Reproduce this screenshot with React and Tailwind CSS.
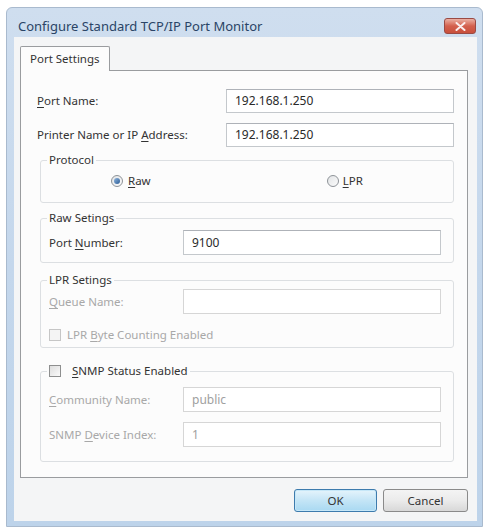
import React from "react";

const font = { fontFamily: '"Noto Sans", "Open Sans", Arial, sans-serif' };

// Text with an underlined access key, like a Win32 dialog label
const Key = ({ text, at = 0 }) => (
    <>
        {text.slice(0, at)}
        <span className="underline underline-offset-2">{text[at]}</span>
        {text.slice(at + 1)}
    </>
);

const TextBox = ({ value, width, height = "h-[25px]", disabled }) => (
    <div
        className={`${width} ${height} flex items-center px-[8px] bg-white border ${
            disabled ? "border-[#d6d6d6] text-[#a0a0a0]" : "border-[#c4c8cc] border-t-[#aeb2b8] text-[#2a2a2a]"
        } text-[12px]`}
    >
        {value}
    </div>
);

const Radio = ({ checked }) => (
    <div className="w-[12px] h-[12px] rounded-full border border-[#8e9398] bg-gradient-to-br from-[#e2e4e6] to-[#fbfbfb] flex items-center justify-center">
        {checked && <div className="w-[6px] h-[6px] rounded-full bg-gradient-to-br from-[#8fb4dc] to-[#2a5d96]" />}
    </div>
);

const Check = ({ disabled }) => (
    <div
        className={`w-[12px] h-[12px] border ${
            disabled ? "border-[#c6c6c6] bg-[#f4f4f4]" : "border-[#8e8f8f] bg-gradient-to-br from-[#dedede] to-[#fafafa]"
        }`}
    />
);

const Group = ({ legend, className, children }) => (
    <fieldset className={`ml-[19px] w-[414px] border border-[#dcdfe2] rounded-[3px] pl-[8px] pr-[12px] ${className}`}>
        <legend className="px-[2px] -ml-[2px] h-[16px] leading-[16px] text-[11.5px] text-[#333]">{legend}</legend>
        {children}
    </fieldset>
);

export default function App() {
    return (
        <div className="w-[487px] h-[528px] bg-white overflow-hidden" style={font}>
            <div className="ml-[6px] mt-[7px] w-[477px] h-[520px] flex flex-col rounded-t-[6px] border border-[#a9bace] bg-gradient-to-b from-[#cfdeef] via-[#c4d7ec] to-[#bdd3ea]">
                {/* title bar */}
                <div className="h-[29px] flex items-start justify-between pl-[11px] pr-[6px]">
                    <span className="mt-[10px] text-[13px] leading-[16px] text-[#2a4466]">Configure Standard TCP/IP Port Monitor</span>
                    <div className="mt-[10px] w-[32px] h-[16px] rounded-[3px] border border-[#9a4a44] bg-gradient-to-b from-[#eab0a4] via-[#d3604e] to-[#c9503c] flex items-center justify-center">
                        <svg width="11" height="9" viewBox="0 0 11 9">
                            <path d="M1.5 1 L9.5 8 M9.5 1 L1.5 8" stroke="#fbeeee" strokeWidth="2" strokeLinecap="round" />
                        </svg>
                    </div>
                </div>

                {/* client area */}
                <div className="ml-[7px] mr-[5px] mb-[5px] flex-1 bg-[#f4f5f6] pl-[6px] pt-[9px] flex flex-col">
                    <div className="flex">
                        <div className="relative z-10 -mb-px h-[25px] px-[9px] flex items-center bg-[#fcfcfc] border border-b-0 border-[#9a9c9f] text-[11.5px] text-[#333] rounded-t-[2px]">
                            Port Settings
                        </div>
                    </div>

                    {/* tab page */}
                    <div className="w-[448px] h-[408px] bg-[#fcfcfc] border border-[#9a9c9f] pt-[18px]">
                        <div className="flex items-center h-[24px] pl-[16px] text-[11.5px] text-[#333]">
                            <span className="w-[189px]"><Key text="Port Name:" /></span>
                            <TextBox value="192.168.1.250" width="w-[228px]" height="h-[24px]" />
                        </div>
                        <div className="flex items-center h-[24px] mt-[10px] pl-[16px] text-[11.5px] text-[#333]">
                            <span className="w-[189px]"><Key text="Printer Name or IP Address:" at={19} /></span>
                            <TextBox value="192.168.1.250" width="w-[228px]" height="h-[24px]" />
                        </div>

                        <Group legend="Protocol" className="mt-[5px] pt-[5px] pb-[13px]">
                            <div className="flex items-center h-[16px] text-[11.5px] text-[#333]">
                                <div className="ml-[62px] flex items-center gap-[5px]">
                                    <Radio checked />
                                    <span><Key text="Raw" /></span>
                                </div>
                                <div className="ml-[176px] flex items-center gap-[4px]">
                                    <Radio />
                                    <span><Key text="LPR" /></span>
                                </div>
                            </div>
                        </Group>

                        <Group legend="Raw Setings" className="mt-[7px] pt-[4px] pb-[7px]">
                            <div className="flex items-center text-[11.5px] text-[#333]">
                                <span className="w-[134px]"><Key text="Port Number:" at={5} /></span>
                                <TextBox value="9100" width="w-[258px]" />
                            </div>
                        </Group>

                        <Group legend="LPR Setings" className="mt-[9px] pt-[1px] pb-[4px]">
                            <div className="flex items-center text-[11.5px] text-[#a8a8a8]">
                                <span className="w-[134px]"><Key text="Queue Name:" /></span>
                                <TextBox value="" width="w-[258px]" disabled />
                            </div>
                            <div className="mt-[13px] h-[16px] flex items-center gap-[6px] text-[11.5px] text-[#a8a8a8]">
                                <Check disabled />
                                <span><Key text="LPR Byte Counting Enabled" at={4} /></span>
                            </div>
                        </Group>

                        <Group
                            legend={
                                <span className="flex items-center gap-[11px]">
                                    <Check />
                                    <span><Key text="SNMP Status Enabled" /></span>
                                </span>
                            }
                            className="mt-[15px] pt-[8px] pb-[14px]"
                        >
                            <div className="flex items-center text-[11.5px] text-[#a8a8a8]">
                                <span className="w-[134px]"><Key text="Community Name:" /></span>
                                <TextBox value="public" width="w-[258px]" disabled />
                            </div>
                            <div className="mt-[10px] flex items-center text-[11.5px] text-[#a8a8a8]">
                                <span className="w-[134px]"><Key text="SNMP Device Index:" at={5} /></span>
                                <TextBox value="1" width="w-[258px]" disabled />
                            </div>
                        </Group>
                    </div>

                    {/* dialog buttons */}
                    <div className="w-[448px] mt-[11px] flex justify-end gap-[6px]">
                        <button className="w-[83px] h-[23px] rounded-[3px] border border-[#3d7bad] bg-gradient-to-b from-[#e5f4fc] via-[#c4e5f6] to-[#a9d9f2] text-[11.5px] text-[#333] shadow-[inset_0_0_0_1px_#c6e7f8]">
                            OK
                        </button>
                        <button className="w-[85px] h-[23px] rounded-[3px] border border-[#8a8a8a] bg-gradient-to-b from-[#f4f4f4] via-[#ebebeb] to-[#d8d8d8] text-[11.5px] text-[#333]">
                            Cancel
                        </button>
                    </div>
                </div>
            </div>
        </div>
    );
}
